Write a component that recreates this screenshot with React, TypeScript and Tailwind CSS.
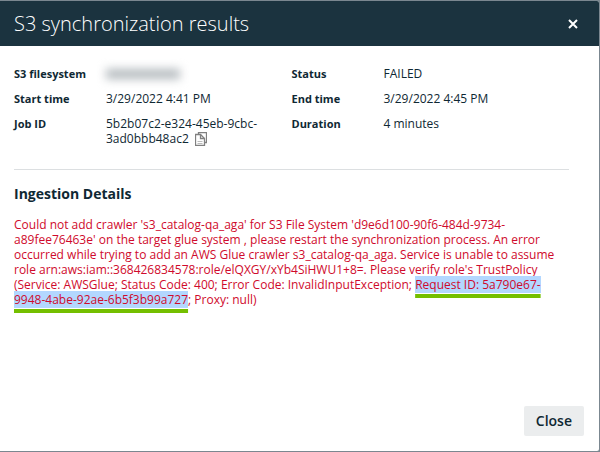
import type { ReactNode } from 'react';

const errorIntro =
  "Could not add crawler 's3_catalog-qa_aga' for S3 File System 'd9e6d100-90f6-484d-9734-a89fee76463e' on the target glue system , please restart the synchronization process. An error occurred while trying to add an AWS Glue crawler s3_catalog-qa_aga. Service is unable to assume role arn:aws:iam::368426834578:role/elQXGY/xYb4SiHWU1+8=. Please verify role's TrustPolicy (Service: AWSGlue; Status Code: 400; Error Code: InvalidInputException; ";

function CopyIcon() {
  return (
    <svg viewBox="0 0 12 14" className="w-3 h-3.5" fill="none" stroke="#808080" aria-hidden="true">
      <path d="M3.5 2.5V.5h8v10h-2" strokeWidth="1.3" />
      <path d="M.5 2.5h5l4 4v7h-9z" fill="#ffffff" strokeWidth="1.3" />
      <path d="M5.5 2.5v4h4" strokeWidth="1.3" />
      <path d="M2.5 9.5h5M2.5 11.5h5" stroke="#bbbbbb" />
    </svg>
  );
}

function Field({ label, children }: { label: string; children: ReactNode }) {
  return (
    <div className="flex">
      <dt className="w-[92px] shrink-0 text-[11px] font-bold">{label}</dt>
      <dd className="min-w-0 flex-1">{children}</dd>
    </div>
  );
}

export default function App() {
  return (
    <div className="min-h-screen flex flex-col bg-[#7b8790] pt-px pr-px pb-px font-['Open_Sans','Noto_Sans',sans-serif] text-xs leading-[15px] text-[#0f2833]">
      <section role="dialog" aria-labelledby="dialog-title" className="flex-1 flex flex-col bg-white rounded-r-xs overflow-hidden">
        <header className="flex items-center justify-between h-[45px] pl-3.5 pr-[19px] bg-[#1b333f] text-white">
          <h1 id="dialog-title" className="text-xl font-light">S3 synchronization results</h1>
          <button type="button" aria-label="Close dialog" className="p-0.5">
            <svg viewBox="0 0 10 10" className="w-2.5 h-2.5" stroke="currentColor" strokeWidth="2" aria-hidden="true">
              <path d="M1 1l8 8M9 1L1 9" />
            </svg>
          </button>
        </header>

        <main className="flex-1 pl-3.5 pr-[30px] pt-5">
          <div className="grid grid-cols-2 border-b border-[#dcdfe1] pb-[23px]">
            <dl className="flex flex-col gap-2.5">
              <Field label="S3 filesystem">
                {/* value is redacted */}
                <span className="flex items-center h-[15px] blur-[5px]" aria-label="Hidden">
                  <span className="w-[74px] h-2.5 bg-[#b4babe]" />
                </span>
              </Field>
              <Field label="Start time">3/29/2022 4:41 PM</Field>
              <Field label="Job ID">
                5b2b07c2-e324-45eb-9cbc-
                <br />
                3ad0bbb48ac2
                <button type="button" aria-label="Copy job ID" className="ml-1.5 h-[15px] align-top">
                  <CopyIcon />
                </button>
              </Field>
            </dl>
            <dl className="flex flex-col gap-2.5">
              <Field label="Status">FAILED</Field>
              <Field label="End time">3/29/2022 4:45 PM</Field>
              <Field label="Duration">4 minutes</Field>
            </dl>
          </div>

          <h2 className="mt-3.5 text-sm leading-5 font-bold">Ingestion Details</h2>
          <p className="mt-[13px] text-[#cf0a2c]">
            {errorIntro}
            <mark className="bg-[#b3d7ff] text-inherit underline decoration-4 decoration-[#74bf00] underline-offset-[5px] [text-decoration-skip-ink:none]">
              Request ID: 5a790e67-9948-4abe-92ae-6b5f3b99a727
            </mark>
            ; Proxy: null)
          </p>
        </main>

        <footer className="flex justify-end pr-[15px] pb-[15px]">
          <button type="button" className="h-[30px] px-3 rounded-xs bg-[#ebedee] text-sm font-semibold">
            Close
          </button>
        </footer>
      </section>
    </div>
  );
}
